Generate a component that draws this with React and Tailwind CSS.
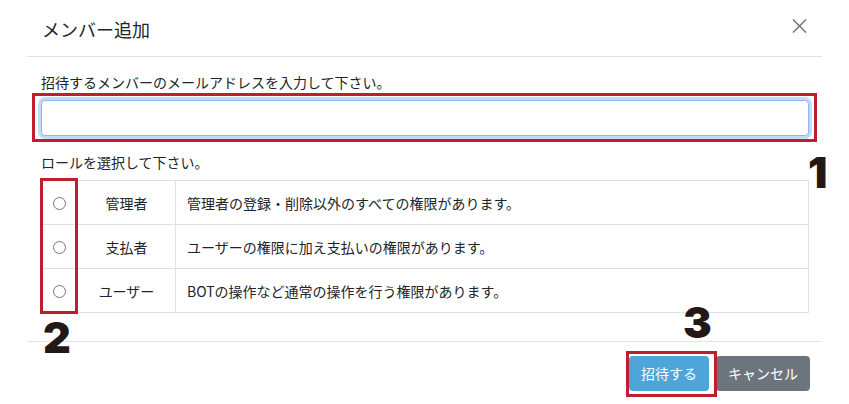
const roles = [
  { name: '管理者', desc: '管理者の登録・削除以外のすべての権限があります。' },
  { name: '支払者', desc: 'ユーザーの権限に加え支払いの権限があります。' },
  { name: 'ユーザー', desc: 'BOTの操作など通常の操作を行う権限があります。' },
]

const App = () => {
  return (
    <div
      className="relative w-[849px] h-[404px] bg-white text-[#212529] overflow-hidden"
      style={{ fontFamily: '"Noto Sans CJK JP", "Noto Sans", sans-serif' }}
    >
      <div className="ml-[27px] w-[795px]">
        {/* header */}
        <div className="h-[57px] pt-[2px] pl-[15px] pr-[15px] flex items-center justify-between border-b border-[#e3e3e3]">
          <h5 className="text-[18px] leading-[24px] font-normal">メンバー追加</h5>
          <button className="w-[16px] h-[16px] flex items-center justify-center text-[#7a7a7a] -mt-[6px]">
            <svg width="15" height="14" viewBox="0 0 15 14" fill="none" stroke="currentColor" strokeWidth="1.6">
              <line x1="1" y1="0.5" x2="14" y2="13.5" />
              <line x1="14" y1="0.5" x2="1" y2="13.5" />
            </svg>
          </button>
        </div>

        {/* body */}
        <div className="pt-[15px] pl-[14px] pr-[13px] pb-[28px]">
          <label className="block text-[14px] leading-[20px] mb-[8px]">
            招待するメンバーのメールアドレスを入力して下さい。
          </label>
          <input
            type="email"
            className="block w-full h-[36px] px-3 rounded-[4px] border border-[#8ab8e8] bg-white shadow-[0_0_0_3px_rgba(150,190,235,0.55)] outline-none"
          />
          <p className="mt-[16px] mb-[8px] text-[14px] leading-[20px]">ロールを選択して下さい。</p>
          <table className="w-full border-collapse text-[14px] leading-[20px]">
            <tbody>
              {roles.map((r) => (
                <tr key={r.name} className="h-[44px]">
                  <td className="w-[36px] border border-[#dee2e6] text-center align-middle p-0">
                    <input type="radio" name="role" className="m-0 align-middle translate-y-[-1px]" />
                  </td>
                  <td className="w-[98px] border border-[#dee2e6] text-center align-middle p-0">{r.name}</td>
                  <td className="border border-[#dee2e6] align-middle px-[11px] py-0">{r.desc}</td>
                </tr>
              ))}
            </tbody>
          </table>
        </div>

        {/* footer */}
        <div className="border-t border-[#e3e3e3] pt-[14px] pr-[12px] flex justify-end gap-[7px]">
          <button className="h-[35px] px-3 rounded-[4px] bg-[#4ea5d7] text-white text-[14px]">招待する</button>
          <button className="h-[35px] px-3 rounded-[4px] bg-[#6c757d] text-white text-[14px]">キャンセル</button>
        </div>
      </div>

      {/* annotation boxes */}
      <div className="absolute left-[32px] top-[93px] w-[785px] h-[49px] border-[3px] border-[#be1e2d]" />
      <div className="absolute left-[40px] top-[178px] w-[38px] h-[136px] border-[3px] border-[#be1e2d]" />
      <div className="absolute left-[626px] top-[351px] w-[91px] h-[46px] border-[3px] border-[#be1e2d]" />

      {/* annotation numbers */}
      <span
        className="absolute left-[808px] top-[151px] text-[43px] leading-none font-black text-[#231815]"
        style={{ fontFamily: 'Inter, "Liberation Sans", sans-serif' }}
      >
        1
      </span>
      <span
        className="absolute left-[43px] top-[316px] text-[43px] leading-none font-black text-[#231815]"
        style={{ fontFamily: 'Inter, "Liberation Sans", sans-serif' }}
      >
        2
      </span>
      <span
        className="absolute left-[683px] top-[301px] text-[43px] leading-none font-black text-[#231815]"
        style={{ fontFamily: 'Inter, "Liberation Sans", sans-serif' }}
      >
        3
      </span>
    </div>
  )
}

export default App
